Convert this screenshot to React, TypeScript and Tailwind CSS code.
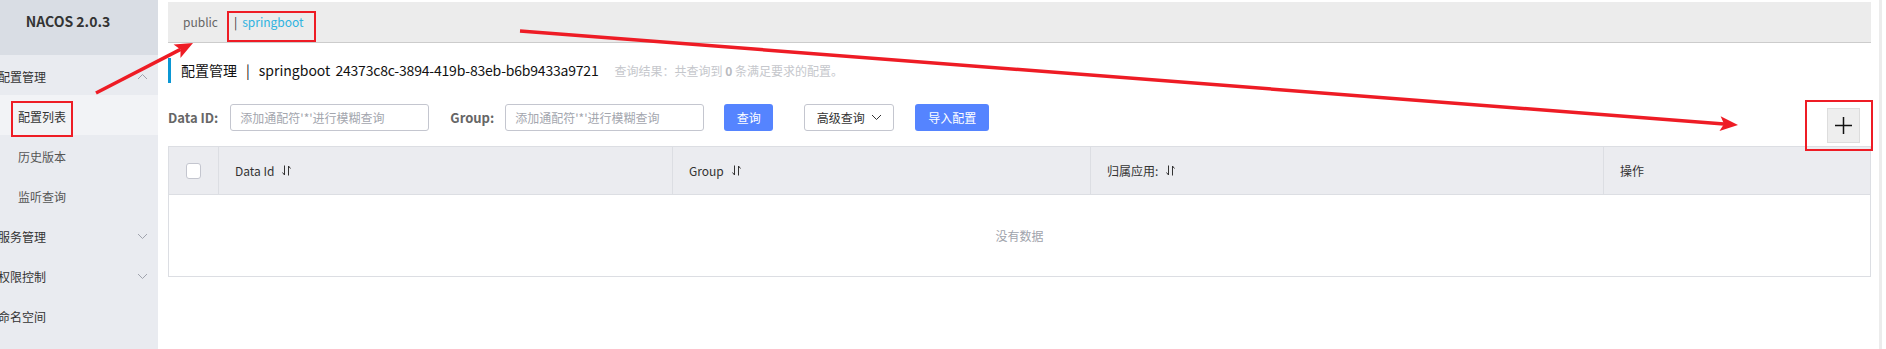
import type { ReactNode } from "react";

const ChevronUp = () => (
  <svg width="11" height="7" viewBox="0 0 11 7" fill="none">
    <path d="M1 6 L5.5 1.5 L10 6" stroke="#a0a3ad" strokeWidth="1" />
  </svg>
);

const ChevronDown = ({ color = "#a0a3ad" }: { color?: string }) => (
  <svg width="11" height="7" viewBox="0 0 11 7" fill="none">
    <path d="M1 1 L5.5 5.5 L10 1" stroke={color} strokeWidth="1" />
  </svg>
);

const SortIcon = () => (
  <svg width="9" height="11" viewBox="0 0 9 11" fill="none" className="ml-[8px]">
    <path d="M2.5 0.5 V10 M0.5 7.5 L2.5 10" stroke="#333" strokeWidth="1" />
    <path d="M6.5 10.5 V1 M6.5 1 L8.5 3.5" stroke="#333" strokeWidth="1" />
  </svg>
);

const MenuItem = ({ label, chevron }: { label: string; chevron?: "up" | "down" }) => (
  <div className="flex h-[40px] items-center justify-between pl-[26px] pr-[16px] pt-[3px] text-[12px] text-[#333]">
    <span>{label}</span>
    {chevron === "up" && <ChevronUp />}
    {chevron === "down" && <ChevronDown />}
  </div>
);

const SubItem = ({ label, active }: { label: string; active?: boolean }) => (
  <div
    className={`flex h-[40px] items-center pl-[46px] pt-[3px] text-[12px] ${
      active ? "bg-[#f2f3f6] text-[#333]" : "text-[#555]"
    }`}
  >
    {label}
  </div>
);

const Sidebar = () => (
  <div className="h-[349px] w-[158px] shrink-0 overflow-hidden bg-[#e9ebf0]">
    <div className="-ml-[28px] w-[192px]">
      <div className="h-[55px] bg-[#d9dde4] pt-[11px] text-center text-[14px] font-bold text-[#333]">
        NACOS 2.0.3
      </div>
      <MenuItem label="配置管理" chevron="up" />
      <SubItem label="配置列表" active />
      <SubItem label="历史版本" />
      <SubItem label="监听查询" />
      <MenuItem label="服务管理" chevron="down" />
      <MenuItem label="权限控制" chevron="down" />
      <MenuItem label="命名空间" />
    </div>
  </div>
);

const SearchInput = () => (
  <div className="flex h-[27px] w-[199px] items-center rounded-[3px] border border-[#c4c6cf] bg-white pl-[9px] text-[12px] text-[#a3a6ae]">
    添加通配符'*'进行模糊查询
  </div>
);

const HeaderCell = ({ width, children, last }: { width: string; children: ReactNode; last?: boolean }) => (
  <div
    className={`flex h-full items-center pl-[16px] text-[12px] text-[#333] ${width} ${
      last ? "" : "border-r border-[#dcdee3]"
    }`}
  >
    {children}
  </div>
);

type Pt = [number, number];

const Arrow = ({ from, to }: { from: Pt; to: Pt }) => {
  const dx = to[0] - from[0];
  const dy = to[1] - from[1];
  const len = Math.hypot(dx, dy);
  const ux = dx / len;
  const uy = dy / len;
  const headLen = 18;
  const half = 7.5;
  const bx = to[0] - ux * headLen;
  const by = to[1] - uy * headLen;
  const p1 = `${bx - uy * half},${by + ux * half}`;
  const p2 = `${bx + uy * half},${by - ux * half}`;
  return (
    <g>
      <line x1={from[0]} y1={from[1]} x2={bx + ux * 4} y2={by + uy * 4} stroke="#ee1c25" strokeWidth="3.5" />
      <polygon points={`${to[0]},${to[1]} ${p1} ${bx + ux * 4},${by + uy * 4} ${p2}`} fill="#ee1c25" />
    </g>
  );
};

const Annotations = () => (
  <svg className="pointer-events-none absolute left-0 top-0" width="1886" height="349" viewBox="0 0 1886 349">
    <rect x="12" y="102" width="60" height="34" fill="none" stroke="#ee1c25" strokeWidth="2" />
    <rect x="228" y="12" width="87" height="29" fill="none" stroke="#ee1c25" strokeWidth="2" />
    <rect x="1806" y="101" width="66" height="49" fill="none" stroke="#ee1c25" strokeWidth="2" />
    <Arrow from={[96, 93]} to={[193, 43]} />
    <Arrow from={[520, 31]} to={[1738, 125]} />
  </svg>
);

export default function App() {
  return (
    <div className="relative flex h-[349px] w-[1886px] overflow-hidden bg-white font-['Noto_Sans_CJK_SC',sans-serif]">
      <Sidebar />

      <div className="flex-1 pl-[10px] pr-[8px]">
        <div className="mt-[2px] flex h-[41px] items-center border-b border-[#cccccc] bg-[#ececec] pl-[15px] text-[12px]">
          <span className="text-[#666]">public</span>
          <span className="ml-[16px] text-[#333]">|</span>
          <span className="ml-[5px] text-[#2fb3e0]">springboot</span>
        </div>

        <div className="mt-[15px] flex h-[25px] items-center border-l-[3px] border-[#0b97d4] pl-[10px]">
          <span className="text-[14px] text-[#111]">配置管理</span>
          <span className="mx-[9px] text-[14px] text-[#111]">|</span>
          <span className="text-[14px] text-[#111]">springboot</span>
          <span className="ml-[5px] text-[14px] tracking-[-0.2px] text-[#111]">24373c8c-3894-419b-83eb-b6b9433a9721</span>
          <span className="ml-[16px] text-[12px] text-[#c5c7cc]">
            查询结果：共查询到 <b className="text-[#b8bac0]">0</b> 条满足要求的配置。
          </span>
        </div>

        <div className="mt-[21px] flex h-[39px] items-start">
          <span className="mt-[4px] text-[13px] font-bold text-[#666]">Data ID:</span>
          <div className="ml-[12px]">
            <SearchInput />
          </div>
          <span className="ml-[21px] mt-[4px] text-[13px] font-bold text-[#666]">Group:</span>
          <div className="ml-[11px]">
            <SearchInput />
          </div>
          <button className="ml-[20px] h-[27px] w-[49px] rounded-[3px] bg-[#5584ff] text-[12px] text-white">查询</button>
          <button className="ml-[31px] flex h-[27px] w-[90px] items-center justify-center gap-[6px] rounded-[3px] border border-[#c4c6cf] bg-white text-[12px] text-[#333]">
            高级查询
            <ChevronDown color="#333" />
          </button>
          <button className="ml-[21px] h-[27px] w-[74px] rounded-[3px] bg-[#5584ff] text-[12px] text-white">导入配置</button>
          <button className="ml-auto mr-[11px] mt-[4px] flex h-[35px] w-[33px] items-center justify-center border border-[#dddddd] bg-[#eeeeee]">
            <svg width="17" height="17" viewBox="0 0 17 17">
              <path d="M8.5 0 V17 M0 8.5 H17" stroke="#111" strokeWidth="1.5" />
            </svg>
          </button>
        </div>

        <div className="mt-[3px] border border-[#dcdee3]">
          <div className="flex h-[48px] border-b border-[#dcdee3] bg-[#ebecf0]">
            <div className="flex h-full w-[50px] items-center justify-center border-r border-[#dcdee3]">
              <div className="h-[16px] w-[15px] rounded-[3px] border border-[#c4c6cf] bg-white" />
            </div>
            <HeaderCell width="w-[454px]">
              Data Id
              <SortIcon />
            </HeaderCell>
            <HeaderCell width="w-[418px]">
              Group
              <SortIcon />
            </HeaderCell>
            <HeaderCell width="w-[513px]">
              归属应用:
              <SortIcon />
            </HeaderCell>
            <HeaderCell width="flex-1" last>
              操作
            </HeaderCell>
          </div>
          <div className="flex h-[81px] items-center justify-center text-[12px] text-[#a0a3ab]">没有数据</div>
        </div>
      </div>

      <div className="h-full w-[3px] bg-[#ececec]" />
      <div className="h-full w-[4px] bg-white" />

      <Annotations />
    </div>
  );
}
